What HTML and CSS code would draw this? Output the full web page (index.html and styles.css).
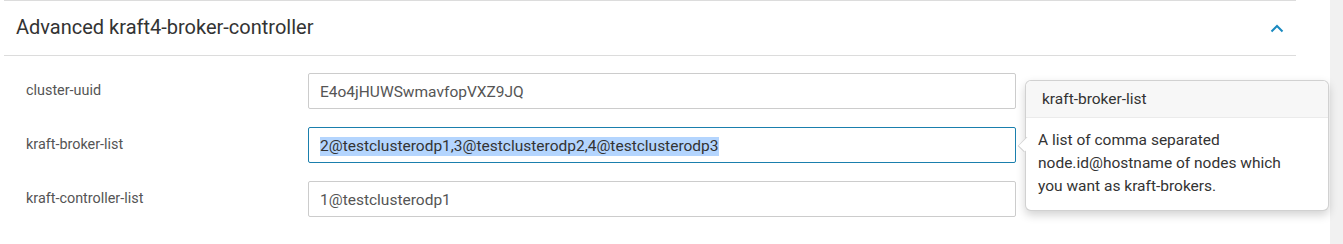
FILE: index.html
```html
<!DOCTYPE html>
<html>
<head>
<meta charset="utf-8">
<link rel="stylesheet" href="styles.css">
</head>
<body>
<div class="page">
  <div class="main">
    <div class="panel">
      <div class="panel-header">
        <span class="panel-title">Advanced kraft4-broker-controller</span>
        <svg class="chevron" width="14" height="9" viewBox="0 0 14 9"><polyline points="1.5,7.5 7,2 12.5,7.5" fill="none" stroke="#1a8ac0" stroke-width="2"/></svg>
      </div>
      <div class="panel-body">
        <div class="row">
          <div class="label">cluster-uuid</div>
          <div class="input">E4o4jHUWSwmavfopVXZ9JQ</div>
        </div>
        <div class="row">
          <div class="label">kraft-broker-list</div>
          <div class="input focused"><span class="sel">2@testclusterodp1,3@testclusterodp2,4@testclusterodp3</span></div>
        </div>
        <div class="row">
          <div class="label">kraft-controller-list</div>
          <div class="input">1@testclusterodp1</div>
        </div>
      </div>
    </div>
  </div>
  <div class="side"></div>
  <div class="popover">
    <div class="arrow"></div>
    <div class="popover-title">kraft-broker-list</div>
    <div class="popover-content">A list of comma separated node.id@hostname of nodes which you want as kraft-brokers.</div>
  </div>
</div>
</body>
</html>
```

FILE: styles.css
```css
html, body {
  margin: 0;
  padding: 0;
  background: #fff;
  font-family: Roboto, "Liberation Sans", sans-serif;
}
.page {
  display: flex;
  height: 244px;
  position: relative;
}
.main {
  width: 1330px;
  padding-left: 4px;
  box-sizing: border-box;
}
.side {
  flex: 1;
  background: #f1f1f1;
}
.panel {
  width: 1292px;
  border-top: 1px solid #dcdcdc;
}
.panel-header {
  border-bottom: 1px solid #dcdcdc;
  display: flex;
  align-items: center;
  justify-content: space-between;
  padding: 0 12px 2px 12px;
  box-sizing: border-box;
  height: 55px;
}
.panel-title {
  font-size: 20px;
  color: #333;
}
.chevron {
  margin-right: 0;
  margin-top: 2px;
}
.panel-body {
  padding: 17px 0 0 22px;
  display: flex;
  flex-direction: column;
  gap: 18px;
}
.row {
  display: flex;
  align-items: center;
}
.label {
  width: 282px;
  font-size: 14.4px;
  color: #555;
  margin-top: -1px;
}
.input {
  width: 708px;
  height: 36px;
  box-sizing: border-box;
  border: 1px solid #ccc;
  border-radius: 2px;
  padding: 2px 11px 0 11px;
  display: flex;
  align-items: center;
  font-size: 15.5px;
  color: #555;
}
.input.focused {
  border-color: #1a7fad;
  color: #333;
}
.sel {
  background: #b4d5fe;
  line-height: 19px;
}
.popover {
  position: absolute;
  left: 1025px;
  top: 80px;
  width: 304px;
  height: 131px;
  box-sizing: border-box;
  background: #fff;
  border: 1px solid rgba(0,0,0,0.18);
  border-radius: 6px;
  box-shadow: 0 4px 10px rgba(0,0,0,0.18);
}
.arrow {
  position: absolute;
  left: -7px;
  top: 57px;
  width: 12px;
  height: 12px;
  background: #fff;
  border-left: 1px solid rgba(0,0,0,0.18);
  border-bottom: 1px solid rgba(0,0,0,0.18);
  transform: rotate(45deg) scale(0.7, 1);
}
.popover-title {
  height: 37px;
  box-sizing: border-box;
  background: #f7f7f7;
  border-bottom: 1px solid #ebebeb;
  border-radius: 6px 6px 0 0;
  padding: 9px 0 0 16px;
  font-size: 15.5px;
  color: #333;
}
.popover-content {
  padding: 11px 30px 0 12px;
  font-size: 15.5px;
  line-height: 23px;
  color: #333;
}
```
